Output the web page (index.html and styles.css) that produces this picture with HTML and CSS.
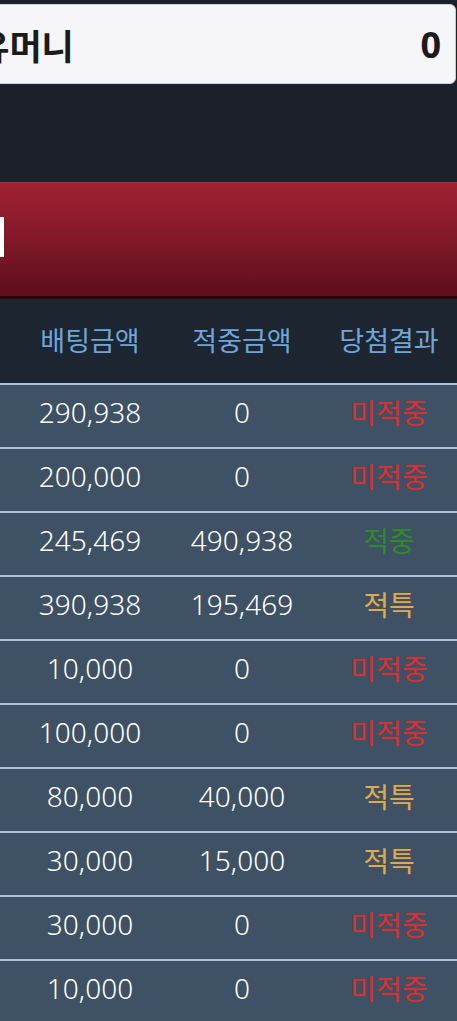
FILE: index.html
```html
<!DOCTYPE html>
<html lang="ko">
<head>
<meta charset="utf-8">
<link rel="stylesheet" href="styles.css">
</head>
<body>
<div class="page">
  <div class="top">
    <div class="money-box">
      <span class="money-label">보유머니</span>
      <span class="money-value">0</span>
    </div>
  </div>
  <div class="banner">
    <span class="banner-mark"></span>
  </div>
  <div class="table">
    <div class="row head">
      <span></span><span>배팅금액</span><span>적중금액</span><span class="res">당첨결과</span>
    </div>
    <div class="row"><span></span><span class="num">290,938</span><span class="num">0</span><span class="res lose">미적중</span></div>
    <div class="row"><span></span><span class="num">200,000</span><span class="num">0</span><span class="res lose">미적중</span></div>
    <div class="row"><span></span><span class="num">245,469</span><span class="num">490,938</span><span class="res win">적중</span></div>
    <div class="row"><span></span><span class="num">390,938</span><span class="num">195,469</span><span class="res special">적특</span></div>
    <div class="row"><span></span><span class="num">10,000</span><span class="num">0</span><span class="res lose">미적중</span></div>
    <div class="row"><span></span><span class="num">100,000</span><span class="num">0</span><span class="res lose">미적중</span></div>
    <div class="row"><span></span><span class="num">80,000</span><span class="num">40,000</span><span class="res special">적특</span></div>
    <div class="row"><span></span><span class="num">30,000</span><span class="num">15,000</span><span class="res special">적특</span></div>
    <div class="row"><span></span><span class="num">30,000</span><span class="num">0</span><span class="res lose">미적중</span></div>
    <div class="row"><span></span><span class="num">10,000</span><span class="num">0</span><span class="res lose">미적중</span></div>
  </div>
</div>
</body>
</html>
```

FILE: styles.css
```css
html, body {
  margin: 0;
  padding: 0;
  background: #1c222a;
  overflow: hidden;
}
body {
  width: 457px;
  height: 1021px;
  font-family: "Noto Sans CJK KR", "Noto Sans", sans-serif;
}
.page {
  width: 457px;
  overflow: hidden;
}
.top {
  padding: 4px 1px 0 0;
  height: 182px;
  box-sizing: border-box;
  background: #1c2129;
}
.money-box {
  margin-left: -78px;
  height: 80px;
  box-sizing: border-box;
  background: #f6f6f8;
  border: 1px solid #c9ccd1;
  border-radius: 6px;
  display: flex;
  align-items: center;
  justify-content: space-between;
  padding: 0 14px 0 22px;
  color: #1b1b1b;
  font-weight: 700;
  font-size: 35px;
}
.money-value {
  font-family: "Noto Sans", sans-serif;
  font-size: 36px;
}
.banner {
  height: 117px;
  box-sizing: border-box;
  border-top: 1px solid #a8302f;
  border-bottom: 3px solid #2a060a;
  background: linear-gradient(to bottom, #a02232 0%, #85192a 45%, #5d0f1c 100%);
  display: flex;
  align-items: center;
}
.banner-mark {
  width: 4px;
  height: 40px;
  background: #ffffff;
  margin-bottom: 5px;
}
.table {
  background: #3e5165;
}
.row {
  display: grid;
  grid-template-columns: 14px 152px 152px 139px;
  align-items: center;
  height: 64px;
  box-sizing: border-box;
  border-top: 2px solid #a6c4de;
  color: #ffffff;
  font-size: 28px;
  text-align: center;
  padding-bottom: 8px;
}
.row.head {
  height: 84px;
  border-top: 0;
  background: #1d2530;
  color: #6fa6d9;
  font-size: 27px;
  padding-bottom: 4px;
}
.num {
  font-family: "Noto Sans", sans-serif;
  font-size: 28px;
  font-weight: 300;
}
.res {
  padding-left: 3px;
}
.lose { color: #dd2f2d; }
.win { color: #2e8a2c; }
.special { color: #e5a84c; }
```
